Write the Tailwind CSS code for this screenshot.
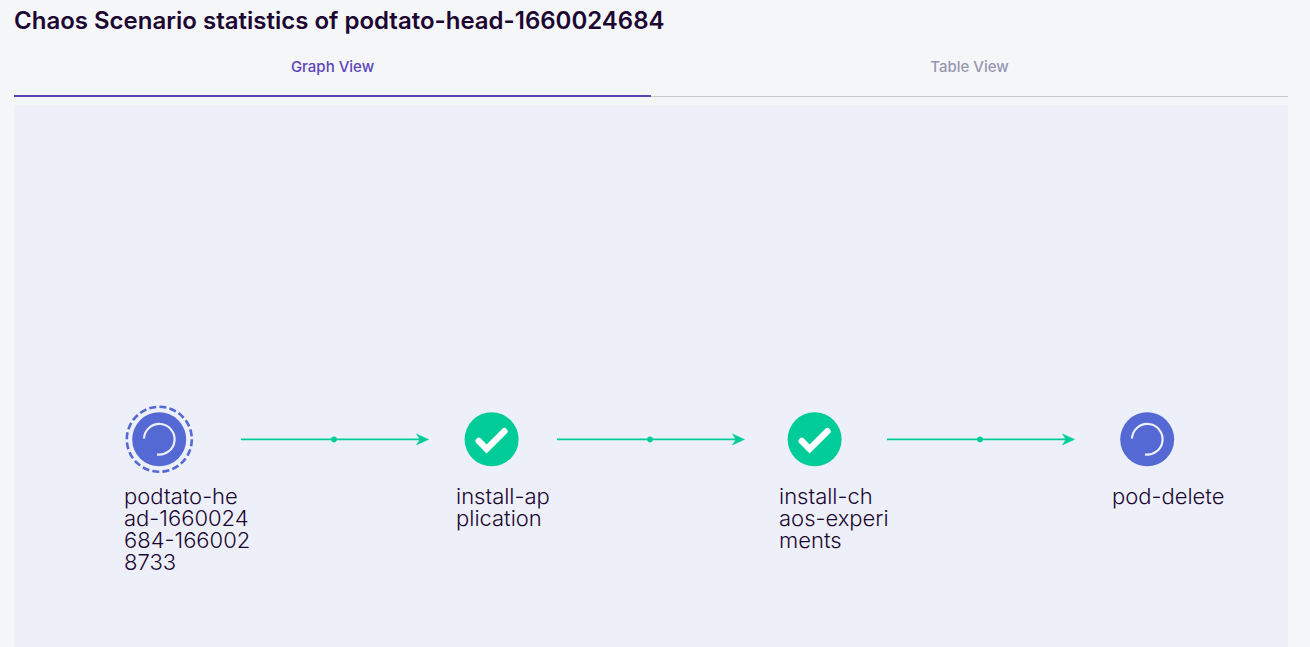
<!DOCTYPE html>
<html lang="en">
<head>
<meta charset="utf-8">
<meta name="viewport" content="width=device-width, initial-scale=1">
<title>Chaos Scenario statistics</title>
<script src="https://cdn.jsdelivr.net/npm/@tailwindcss/browser@4"></script>
</head>
<body class="flex min-h-screen flex-col bg-[#f5f6f8] pr-[22px] pl-[14px] font-['Inter',sans-serif] text-[#1c0732]">
<svg class="hidden" aria-hidden="true">
  <symbol id="running" viewBox="0 0 70 70">
    <circle cx="35.2" cy="35.3" r="27" fill="#5469d4"/>
    <path d="M20 34.5A15.3 15.3 0 1 1 33 50.4" fill="none" stroke="#edf0fa" stroke-width="2.2"/>
  </symbol>
  <symbol id="succeeded" viewBox="0 0 70 70">
    <circle cx="35.6" cy="35.3" r="27" fill="#00cc9a"/>
    <path d="M22.8 37 30.6 45 48.4 27.2" fill="none" stroke="#fff" stroke-width="6.4" stroke-linecap="round"/>
  </symbol>
  <symbol id="edge" viewBox="0 0 190 14">
    <path d="M1 7.4H180" stroke="#00cc9a" stroke-width="1.9"/>
    <circle cx="94" cy="7.4" r="2.8" fill="#00cc9a"/>
    <path d="M176.5 1.9 188.5 7.4 176.5 12.9 180 7.4Z" fill="#00cc9a" stroke="#00cc9a" stroke-width=".5"/>
  </symbol>
</svg>
<h1 class="pt-[5px] text-2xl leading-8 font-semibold">Chaos Scenario statistics of podtato-head-1660024684</h1>
<div role="tablist" class="mt-[3px] mb-2 grid grid-cols-2 text-[15px] font-medium">
  <button id="tab-graph" role="tab" aria-selected="true" aria-controls="graph" class="h-[57px] border-b-2 border-[#5b44ba] text-[#5b44ba]">Graph View</button>
  <button id="tab-table" role="tab" aria-selected="false" class="h-[57px] border-b border-[#c9c9cd] pb-px text-[#9696b0]">Table View</button>
</div>
<main id="graph" role="tabpanel" aria-labelledby="tab-graph" class="relative flex-1 overflow-hidden bg-[#edf0f9] text-[22px] leading-[22px] font-light">
  <svg class="absolute top-[327px] left-[226px] h-[14px] w-[190px]"><use href="#edge"/></svg>
  <svg class="absolute top-[327px] left-[542px] h-[14px] w-[190px]"><use href="#edge"/></svg>
  <svg class="absolute top-[327px] left-[872px] h-[14px] w-[190px]"><use href="#edge"/></svg>

  <div class="absolute top-[299px] left-[110px]">
    <svg class="size-[70px]" viewBox="0 0 70 70">
      <use href="#running"/>
      <circle cx="35.3" cy="35.3" r="32.5" fill="none" stroke="#5469d4" stroke-width="2.6" stroke-dasharray="7 3.2"/>
    </svg>
    <p class="mt-[11px]">podtato-he<br>ad-1660024<br>684-166002<br>8733</p>
  </div>
  <div class="absolute top-[299px] left-[442px]">
    <svg class="size-[70px]"><use href="#succeeded"/></svg>
    <p class="mt-[11px]">install-ap<br>plication</p>
  </div>
  <div class="absolute top-[299px] left-[765px]">
    <svg class="size-[70px]"><use href="#succeeded"/></svg>
    <p class="mt-[11px]">install-ch<br>aos-experi<br>ments</p>
  </div>
  <div class="absolute top-[299px] left-[1098px]">
    <svg class="size-[70px]"><use href="#running"/></svg>
    <p class="mt-[11px]">pod-delete</p>
  </div>
</main>
</body>
</html>
